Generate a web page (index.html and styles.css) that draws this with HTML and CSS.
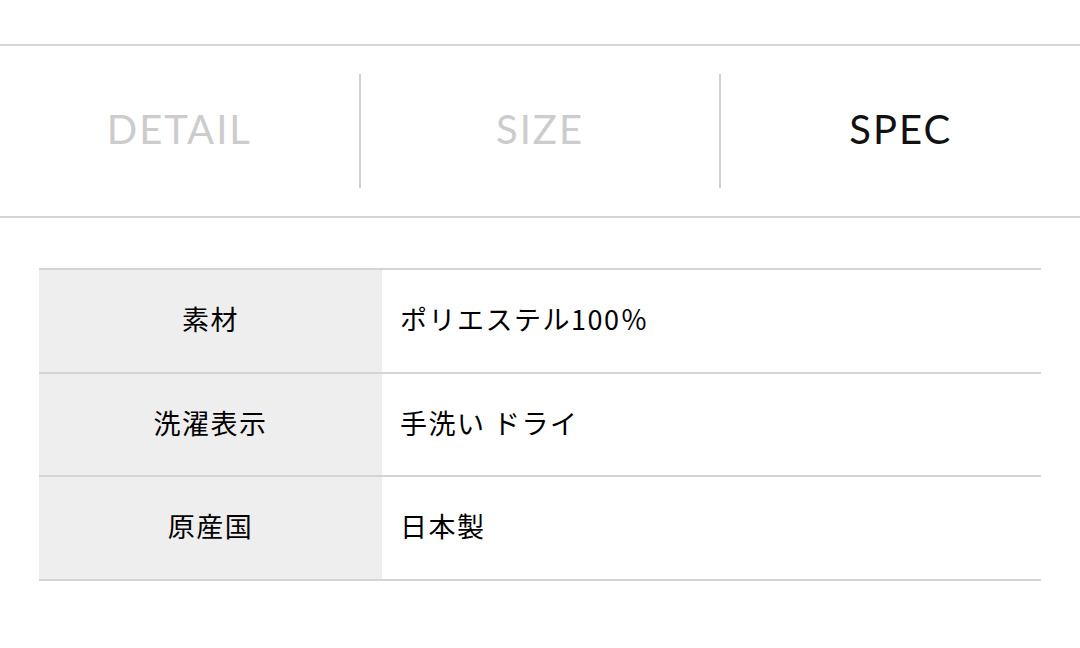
FILE: index.html
```html
<!DOCTYPE html>
<html lang="ja">

<head>
    <meta charset="UTF-8">
    <meta name="viewport" content="width=device-width, initial-scale=1.0">
    <title>Item spec</title>
    <link rel="stylesheet" href="styles.css">
</head>

<body>
    <div class="tabs">
        <div class="tab">DETAIL</div>
        <div class="tab">SIZE</div>
        <div class="tab active">SPEC</div>
    </div>

    <table class="spec">
        <tr>
            <th>素材</th>
            <td>ポリエステル100％</td>
        </tr>
        <tr>
            <th>洗濯表示</th>
            <td>手洗い ドライ</td>
        </tr>
        <tr>
            <th>原産国</th>
            <td>日本製</td>
        </tr>
    </table>
</body>

</html>
```

FILE: styles.css
```css
body {
    margin: 0;
    background-color: white;
    color: black;
    font-family: 'Noto Sans CJK JP', sans-serif;
}

.tabs {
    display: flex;
    margin-top: 44px;
    padding: 28px 0 28px;
    border-top: 2px solid #d6d6d6;
    border-bottom: 2px solid #d6d6d6;
}

.tab {
    flex: 1;
    height: 114px;
    padding-bottom: 5px;
    box-sizing: border-box;
    display: flex;
    align-items: center;
    justify-content: center;
    font-family: 'Lato', sans-serif;
    font-size: 40px;
    letter-spacing: 2px;
    color: #cccccc;
    border-left: 2px solid #d0d0d0;
}

.tab:first-child {
    border-left: none;
}

.tab.active {
    color: #111;
}

.spec {
    width: 1002px;
    margin: 50px 0 0 39px;
    border-collapse: collapse;
    border-top: 2px solid #d4d4d4;
}

.spec tr {
    border-bottom: 2px solid #d4d4d4;
}

.spec th,
.spec td {
    height: 97.5px;
    padding: 0 0 4px;
    font-size: 27px;
    letter-spacing: 1.5px;
    font-weight: normal;
}

.spec th {
    width: 343px;
    background-color: #eeeeee;
    text-align: center;
}

.spec td {
    padding-left: 18px;
    text-align: left;
}
```
